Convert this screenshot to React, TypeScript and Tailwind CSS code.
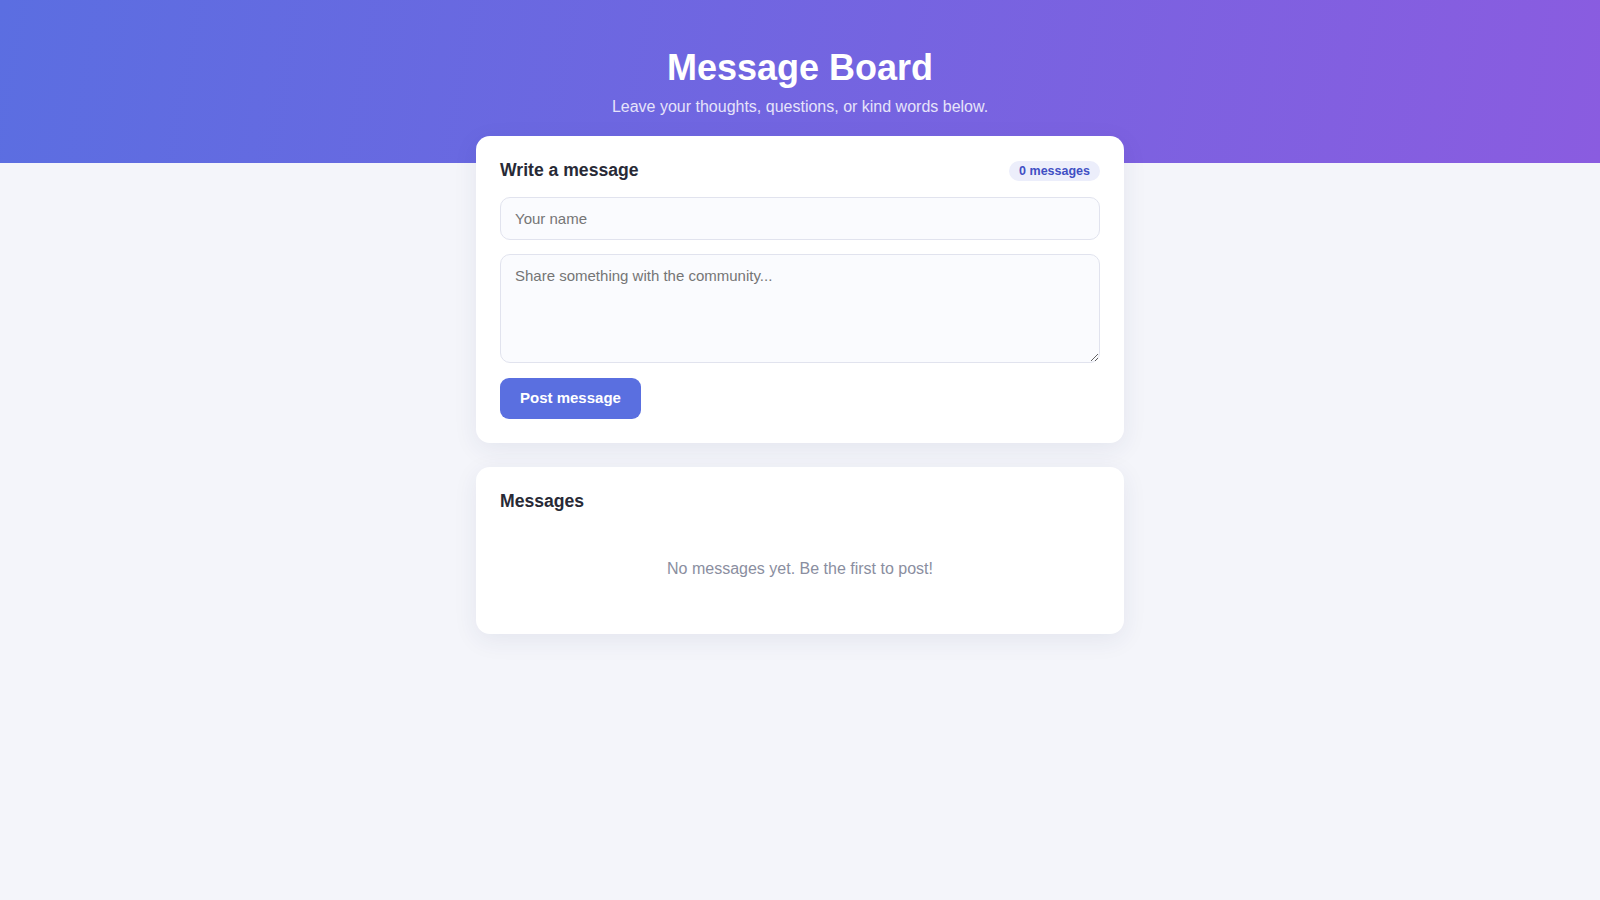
import { useState } from "react";

export default function App() {
  const [name, setName] = useState("");
  const [body, setBody] = useState("");

  return (
    <div className="min-h-screen bg-[#f4f5fa] font-['Liberation_Sans',Arial,sans-serif] text-[#282a36]">
      <header className="h-[163px] bg-[linear-gradient(100deg,#5b6ee1_0%,#8a5ce0_100%)] pt-[47px] text-center">
        <h1 className="text-[36px] font-bold leading-[42px] text-white">Message Board</h1>
        <p className="mt-[6px] text-[16px] leading-6 text-[#e6e3fa]">
          Leave your thoughts, questions, or kind words below.
        </p>
      </header>

      <main className="mx-auto -mt-[27px] flex w-[648px] flex-col gap-6 pb-10">
        <section className="rounded-[14px] bg-white px-6 pt-6 pb-6 shadow-[0_6px_24px_rgba(40,50,100,0.08)]">
          <div className="flex h-5 items-center justify-between">
            <h2 className="text-[17.6px] font-bold leading-5">Write a message</h2>
            <span className="mt-[2px] rounded-full bg-[#eceefb] px-[10px] py-[3px] text-[12.5px] font-bold leading-[14px] text-[#4150c4]">
              0 messages
            </span>
          </div>
          <input
            type="text"
            value={name}
            onChange={(e) => setName(e.target.value)}
            placeholder="Your name"
            className="mt-[17px] block h-[43px] w-full rounded-[10px] border border-[#e1e3ee] bg-[#fafbfe] px-[14px] text-[15px] text-[#252733] placeholder:text-[#757575] focus:outline-none"
          />
          <textarea
            value={body}
            onChange={(e) => setBody(e.target.value)}
            placeholder="Share something with the community..."
            className="mt-[14px] block h-[109px] w-full rounded-[10px] border border-[#e1e3ee] bg-[#fafbfe] px-[14px] py-[11px] text-[15px] leading-5 text-[#252733] placeholder:text-[#757575] focus:outline-none"
          />
          <button
            type="button"
            className="mt-[15px] h-[41px] rounded-[9px] bg-[#5a6fe0] px-5 text-[15px] font-bold text-white"
          >
            Post message
          </button>
        </section>

        <section className="rounded-[14px] bg-white px-6 pt-6 pb-[22px] shadow-[0_6px_24px_rgba(40,50,100,0.08)]">
          <h2 className="text-[17.6px] font-bold leading-5">Messages</h2>
          <p className="mt-[46px] text-center text-[16px] leading-6 text-[#8a8ea0]">
            No messages yet. Be the first to post!
          </p>
          <div className="h-[31px]" />
        </section>
      </main>
    </div>
  );
}
